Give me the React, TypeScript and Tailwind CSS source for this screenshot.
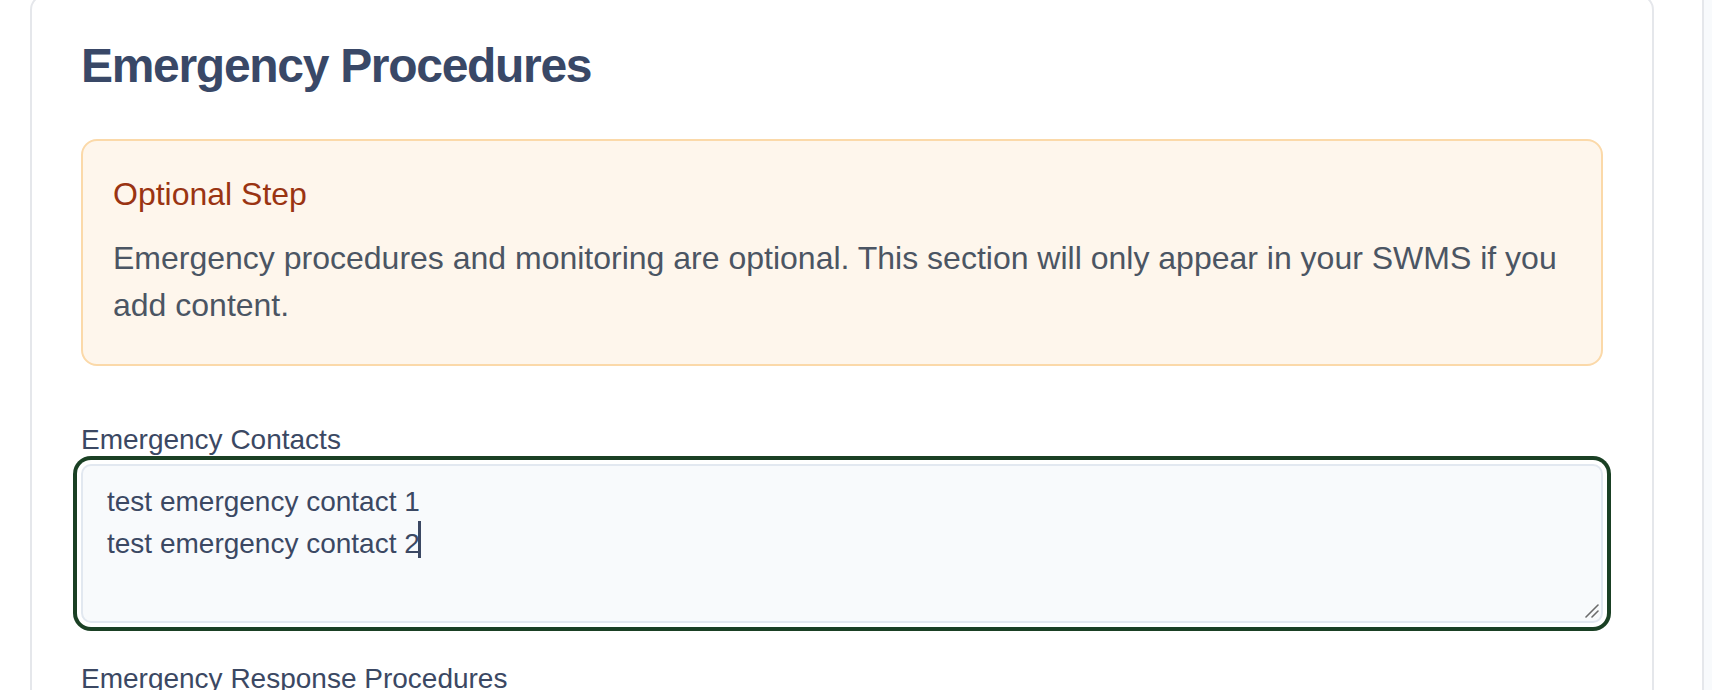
import React from "react";

const contacts = ["test emergency contact 1", "test emergency contact 2"];

function ResizeGrip() {
  return (
    <svg
      className="absolute bottom-[3px] right-[2px]"
      width="14"
      height="14"
      viewBox="0 0 14 14"
      fill="none"
    >
      <path d="M13 1L1 13" stroke="#6b6b6b" strokeWidth="1.6" strokeLinecap="round" />
      <path d="M13 7L7 13" stroke="#6b6b6b" strokeWidth="1.6" strokeLinecap="round" />
    </svg>
  );
}

function FieldLabel({ children }: { children: React.ReactNode }) {
  return <label className="mb-1 block text-[28px] leading-[40px] text-[#3b4863]">{children}</label>;
}

export default function App() {
  return (
    <div className="flex h-[690px] w-full overflow-hidden bg-white font-['Liberation_Sans',Arial,sans-serif]">
      <main className="flex-1 pl-[30px] pr-[48px]">
        <section className="-mt-[6px] rounded-2xl border-2 border-[#e5e7eb] bg-white px-[49px] pt-[38px] pb-12">
          <h1 className="text-[48px] leading-[64px] font-bold tracking-[-1.3px] text-[#394867]">
            Emergency Procedures
          </h1>

          <div className="mt-[41px] rounded-2xl border-2 border-[#fbd9a9] bg-[#fef6ec] px-[30px] pt-[30px] pb-[34px]">
            <h2 className="mb-4 text-[32px] leading-[47.5px] text-[#9a3412]">Optional Step</h2>
            <p className="text-[32px] leading-[47.5px] text-[#4b5563]">
              Emergency procedures and monitoring are optional. This section will only appear in your SWMS if you
              add content.
            </p>
          </div>

          <div className="mt-[54px]">
            <FieldLabel>Emergency Contacts</FieldLabel>
            <div className="relative h-[159px] rounded-[10px] border-2 border-[#e2e8f0] bg-[#f8fafc] px-6 pt-4 text-[28px] leading-[39.5px] text-[#3b4863] ring-4 ring-[#1a4024] ring-offset-4 ring-offset-white">
              {contacts.map((line, i) => (
                <div key={i}>
                  {line}
                  {i === contacts.length - 1 && (
                    <span className="ml-[-2px] inline-block h-[37px] w-[3px] bg-[#3b4863] align-[-5px]" />
                  )}
                </div>
              ))}
              <ResizeGrip />
            </div>
          </div>

          <div className="mt-[36px]">
            <FieldLabel>Emergency Response Procedures</FieldLabel>
            <div className="h-[159px] rounded-[10px] border-2 border-[#e2e8f0] bg-[#f8fafc]" />
          </div>
        </section>
      </main>
      <aside className="w-[10px] border-l-2 border-[#e5e7eb] bg-[#f8fafc]" />
    </div>
  );
}
